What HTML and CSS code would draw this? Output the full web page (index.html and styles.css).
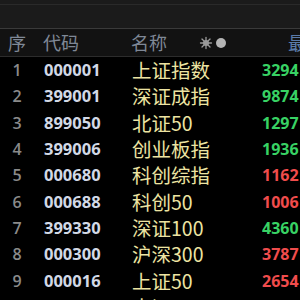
FILE: index.html
```html
<!DOCTYPE html>
<html>
<head>
<meta charset="utf-8">
<link rel="stylesheet" href="styles.css">
</head>
<body>
<div class="topbar"><div class="topline"></div></div>
<div class="head">
  <span class="h-idx">序</span>
  <span class="h-code">代码</span>
  <span class="h-name">名称</span>
  <span class="h-icons">
    <svg width="30" height="14" viewBox="0 0 30 14">
      <g stroke="#9a9a9a" stroke-width="1.3" stroke-linecap="round">
        <line x1="7" y1="1.5" x2="7" y2="12.5"/>
        <line x1="1.5" y1="7" x2="12.5" y2="7"/>
        <line x1="3" y1="3" x2="11" y2="11"/>
        <line x1="11" y1="3" x2="3" y2="11"/>
      </g>
      <circle cx="7" cy="7" r="3" fill="#9a9a9a"/>
      <circle cx="22" cy="7" r="5" fill="#b4b4b4"/>
    </svg>
  </span>
  <span class="h-price">最</span>
</div>
<div class="rows">
  <div class="row"><span class="idx">1</span><span class="code">000001</span><span class="name">上证指数</span><span class="price up">3294</span></div>
  <div class="row"><span class="idx">2</span><span class="code">399001</span><span class="name">深证成指</span><span class="price up">9874</span></div>
  <div class="row"><span class="idx">3</span><span class="code">899050</span><span class="name">北证50</span><span class="price up">1297</span></div>
  <div class="row"><span class="idx">4</span><span class="code">399006</span><span class="name">创业板指</span><span class="price up">1936</span></div>
  <div class="row"><span class="idx">5</span><span class="code">000680</span><span class="name">科创综指</span><span class="price down">1162</span></div>
  <div class="row"><span class="idx">6</span><span class="code">000688</span><span class="name">科创50</span><span class="price down">1006</span></div>
  <div class="row"><span class="idx">7</span><span class="code">399330</span><span class="name">深证100</span><span class="price up">4360</span></div>
  <div class="row"><span class="idx">8</span><span class="code">000300</span><span class="name">沪深300</span><span class="price down">3787</span></div>
  <div class="row"><span class="idx">9</span><span class="code">000016</span><span class="name">上证50</span><span class="price down">2654</span></div>
  <div class="row"><span class="idx">10</span><span class="code">000852</span><span class="name">中证1000</span><span class="price down">6012</span></div>
</div>
</body>
</html>
```
FILE: styles.css
```css
html, body {
  margin: 0;
  padding: 0;
  background: #000;
  overflow: hidden;
  width: 300px;
  height: 300px;
}
body {
  font-family: "Noto Sans CJK SC", "Noto Sans", sans-serif;
}
.topbar {
  height: 29px;
  background: #1b1b1b;
  border-bottom: 1px solid #3a3a3a;
  padding-top: 4px;
  box-sizing: border-box;
}
.topline {
  height: 1px;
  background: #2a2a2a;
}
.head {
  height: 27px;
  background: #121212;
  border-bottom: 1px solid #2c2c2c;
  display: flex;
  align-items: center;
  white-space: nowrap;
  color: #7f8896;
  font-size: 18px;
  line-height: 27px;
  overflow: hidden;
}
.head > span { flex-shrink: 0; }
.h-idx { margin-left: 8px; width: 35px; }
.h-code { width: 88px; }
.h-name { width: 68px; }
.h-icons { width: 89px; display: flex; align-items: center; }
.h-icons svg { display: block; }
.h-price { color: #5a7aa8; }
.rows {
  padding-top: 0;
}
.row {
  height: 26.3px;
  line-height: 26px;
  display: grid;
  grid-template-columns: 34px 98px 130px 1fr;
  align-items: center;
  white-space: nowrap;
  overflow: hidden;
}
.idx {
  text-align: center;
  color: #8a8a8a;
  font-family: "Open Sans", sans-serif;
  font-size: 16px;
  font-weight: 600;
}
.code {
  padding-left: 10px;
  color: #d2d9e6;
  font-family: "Open Sans", sans-serif;
  font-size: 16.5px;
  font-weight: 700;
}
.name {
  color: #ede4a2;
  font-size: 19.5px;
  font-family: "Noto Sans CJK SC", sans-serif;
}
.price {
  font-family: "Open Sans", sans-serif;
  font-size: 16px;
  font-weight: 700;
  overflow: hidden;
}
.up { color: #38d264; }
.down { color: #f04c4c; }
```
